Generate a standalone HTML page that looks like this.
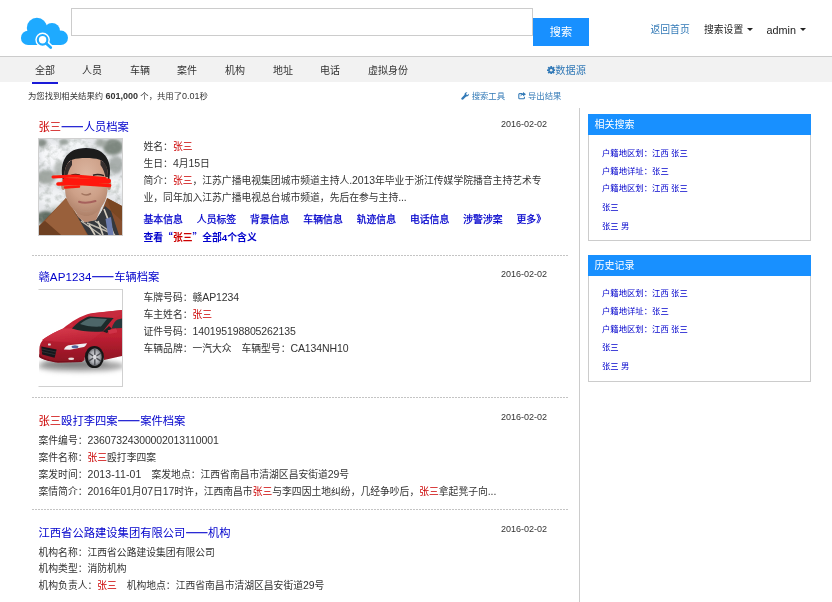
<!DOCTYPE html>
<html lang="zh-CN">
<head>
<meta charset="utf-8">
<title>搜索</title>
<style>
*{box-sizing:border-box;margin:0;padding:0}
html{width:832px;height:602px;overflow:hidden;background:#fff}
body{width:832px;height:602px;overflow:hidden;background:transparent;will-change:transform}
body{font-family:"Liberation Sans","Noto Sans CJK SC",sans-serif;font-size:9.8px;color:#333;position:relative}
a{text-decoration:none;color:inherit}
.abs{position:absolute;white-space:nowrap}
#search-input{position:absolute;left:71px;top:8px;width:462px;height:28px;border:1px solid #ccc;background:#fff}
#search-btn{position:absolute;left:533px;top:18px;width:56px;height:28px;background:#1890ff;color:#fff;font-size:11.2px;text-align:center;line-height:28px}
.toplink{position:absolute;top:23px;font-size:9.8px;line-height:14px;white-space:nowrap}
.caret{position:absolute;width:0;height:0;border-left:3px solid transparent;border-right:3px solid transparent;border-top:3.5px solid #222}
#nav{position:absolute;left:0;top:56px;width:832px;height:26px;background:#f2f2f2;border-top:1px solid #ccc}
#nav span{position:absolute;top:0;line-height:27px;font-size:10px;color:#333;white-space:nowrap}
#nav .ul{position:absolute;left:32px;top:25px;width:26px;height:2px;background:#1a1ad8}
.info{position:absolute;top:90px;font-size:8.35px;line-height:12px;white-space:nowrap;color:#333}
.tool{color:#337ab7}
.vline{position:absolute;left:579px;top:108px;width:1px;height:494px;background:#ccc}
.title{position:absolute;left:38.5px;font-size:11.3px;line-height:16px;color:#0000cc;white-space:nowrap}
.red{color:#cc0000}
.date{position:absolute;left:501px;font-size:9px;line-height:12px;color:#333;white-space:nowrap}
.row{position:absolute;font-size:9.8px;line-height:17px;color:#333;white-space:nowrap}
.l{font-size:10.5px;letter-spacing:-0.1px;line-height:1}
.q{font-family:"Noto Sans CJK SC",sans-serif}
.title .q{-webkit-text-stroke:0.5px #0000cc}
.sep{position:absolute;left:32px;width:536px;height:1px;background:repeating-linear-gradient(90deg,#c4c4c4 0,#c4c4c4 2px,transparent 2px,transparent 3px)}
.links{position:absolute;left:143.5px;font-size:9.85px;line-height:14px;color:#0000cc;white-space:nowrap}
.links a{display:inline-block;margin-right:13.9px}
.panel{position:absolute;left:588px;width:223px;border:1px solid #ccc;background:#fff}
.panel .hd{position:absolute;left:-1px;top:-1px;width:223px;height:21px;background:#1890ff;color:#fff;font-size:10px;line-height:21px;padding-left:6.5px}
.panel a{position:absolute;left:13px;font-size:8.35px;line-height:12px;color:#0000cc;white-space:nowrap}
.imgbox{position:absolute;left:38px;width:85px;border:1px solid #d0d0d0;background:#fff;overflow:hidden}
.imgbox svg{display:block}
</style>
</head>
<body>
<!-- logo -->
<svg class="abs" style="left:0;top:0" width="80" height="56" viewBox="0 0 80 56">
  <g fill="#1eaaff">
    <circle cx="36.9" cy="27.9" r="10.1"/>
    <circle cx="52" cy="31" r="8"/>
    <circle cx="28.1" cy="37.9" r="7.15"/>
    <circle cx="60.8" cy="37.8" r="7.2"/>
    <rect x="28.1" y="31" width="32.7" height="14"/>
  </g>
  <circle cx="42.6" cy="39.8" r="7.3" fill="#fff"/>
  <path d="M46.3 43.4 L50.7 47.5" stroke="#fff" stroke-width="5.6" stroke-linecap="round"/>
  <path d="M35 45h20v4h-20z" fill="#fff"/>
  <circle cx="42.6" cy="39.8" r="4.8" fill="#fff" stroke="#1eaaff" stroke-width="2.2"/>
  <path d="M46.3 43.4 L50.7 47.5" stroke="#1eaaff" stroke-width="2.8" stroke-linecap="round"/>
</svg>
<div id="search-input"></div>
<div id="search-btn">搜索</div>
<a class="toplink" style="left:650.5px;color:#337ab7">返回首页</a>
<a class="toplink" style="left:704px;color:#222">搜索设置</a><i class="caret" style="left:747px;top:28px"></i>
<a class="toplink" style="left:766.5px;color:#222;font-size:10.8px">admin</a><i class="caret" style="left:799.5px;top:28px"></i>

<div id="nav">
  <span style="left:35px">全部</span>
  <span style="left:82px">人员</span>
  <span style="left:130px">车辆</span>
  <span style="left:177px">案件</span>
  <span style="left:225px">机构</span>
  <span style="left:273px">地址</span>
  <span style="left:320px">电话</span>
  <span style="left:368px">虚拟身份</span>
  <span style="left:555.3px;color:#337ab7;font-size:10.2px">数据源</span>
  <div class="ul"></div>
</div>
<!-- gear -->
<svg class="abs" style="left:547px;top:65.5px" width="8.4" height="8.4" viewBox="-12 -12 24 24">
  <g fill="#337ab7">
    <circle r="8.2"/>
    <g id="gt"><rect x="-2.6" y="-12" width="5.2" height="24" rx="1"/></g>
    <rect x="-2.6" y="-12" width="5.2" height="24" rx="1" transform="rotate(45)"/>
    <rect x="-2.6" y="-12" width="5.2" height="24" rx="1" transform="rotate(90)"/>
    <rect x="-2.6" y="-12" width="5.2" height="24" rx="1" transform="rotate(135)"/>
  </g>
  <circle r="3.6" fill="#f2f2f2"/>
</svg>

<div class="info" style="left:28px">为您找到相关结果约 <b style="font-size:9px">601,000</b> 个，共用了<span style="font-size:9px">0.01</span>秒</div>
<!-- wrench -->
<svg class="abs" style="left:461px;top:92.3px" width="8" height="8" viewBox="0 0 16 16">
  <path d="M2.2 14.8 a1.7 1.7 0 0 1 -1.2 -2.9 L7.2 5.7 A4.4 4.4 0 0 1 12.9 0.6 L10.3 3.2 L10.9 5.3 L13 5.9 L15.6 3.3 A4.4 4.4 0 0 1 10.4 8.9 L4.3 15 a1.7 1.7 0 0 1 -2.1 -0.2z" fill="#337ab7"/>
</svg>
<div class="info tool" style="left:471.7px">搜索工具</div>
<!-- export -->
<svg class="abs" style="left:517.7px;top:92.3px" width="8" height="7.5" viewBox="0 0 16 15">
  <path d="M9 3.2H3.2a1.6 1.6 0 0 0 -1.6 1.6v7a1.6 1.6 0 0 0 1.6 1.6h8a1.6 1.6 0 0 0 1.6 -1.6V9.5" fill="none" stroke="#337ab7" stroke-width="2.1"/>
  <path d="M10 0.2 L16 4.4 L10 8.6 V6 C7.5 6 6 7 5 9.4 C5 5.6 7 3 10 2.8z" fill="#337ab7"/>
</svg>
<div class="info tool" style="left:528px">导出结果</div>

<div class="vline"></div>

<!-- result 1 -->
<div class="title" style="top:118px"><span class="red">张三</span><span class="q">——</span>人员档案</div>
<div class="date" style="top:117.5px">2016-02-02</div>
<div class="imgbox" style="top:138px;height:98px" id="img1"><svg width="83" height="96" viewBox="0 0 83 96">
  <defs>
    <filter id="b1" x="-10%" y="-10%" width="120%" height="120%"><feGaussianBlur stdDeviation="1.5"/></filter>
    <filter id="b2" x="-10%" y="-10%" width="120%" height="120%"><feGaussianBlur stdDeviation="0.6"/></filter>
    <filter id="b3" x="-10%" y="-10%" width="120%" height="120%"><feGaussianBlur stdDeviation="0.3"/></filter>
    <filter id="sn" x="0" y="0" width="100%" height="100%">
      <feTurbulence type="fractalNoise" baseFrequency="0.16" numOctaves="3" seed="11"/>
      <feColorMatrix type="matrix" values="0 0 0 0 0.30  0 0 0 0 0.34  0 0 0 0 0.31  2.2 0 0 0 -0.95"/>
    </filter>
    <radialGradient id="fg" cx="0.5" cy="0.3" r="0.75">
      <stop offset="0" stop-color="#dcb7a2"/><stop offset="0.55" stop-color="#cda088"/><stop offset="1" stop-color="#a97c64"/>
    </radialGradient>
  </defs>
  <rect width="83" height="96" fill="#e6e8eb"/>
  <g filter="url(#b1)">
    <ellipse cx="14" cy="16" rx="12" ry="11" fill="#f6f7f9"/>
    <ellipse cx="38" cy="6" rx="12" ry="6" fill="#f3f5f7"/>
    <ellipse cx="3" cy="4" rx="5" ry="4" fill="#848c86"/>
    <ellipse cx="25" cy="3" rx="5" ry="3" fill="#9aa19c"/>
    <ellipse cx="74" cy="8" rx="10" ry="8" fill="#7d877f"/>
    <ellipse cx="62" cy="4" rx="6" ry="4" fill="#a4aba6"/>
    <ellipse cx="77" cy="26" rx="7" ry="9" fill="#a9afad"/>
    <ellipse cx="7" cy="38" rx="10" ry="7" fill="#a3a9a4"/>
    <ellipse cx="20" cy="30" rx="5" ry="8" fill="#b7bcb9"/>
    <ellipse cx="76" cy="48" rx="9" ry="8" fill="#f3f5f7"/>
    <ellipse cx="12" cy="58" rx="14" ry="8" fill="#f0f2f4"/>
    <ellipse cx="7" cy="79" rx="10" ry="7" fill="#5f6c62"/>
    <ellipse cx="18" cy="70" rx="7" ry="4" fill="#d2d6d4"/>
  </g>
  <rect width="83" height="96" filter="url(#sn)" opacity="0.5"/>
  <g filter="url(#b2)">
    <!-- coat -->
    <path d="M27 59 L0 87 V96 H83 V67 L68 59 L62 74 L50 90 L38 76z" fill="#87502e"/>
    <path d="M27 59 L6 82 L22 96 H48 L38 76z" fill="#99603a"/>
    <path d="M0 87 L6 82 L22 96 H0z" fill="#6e3f22"/>
    <path d="M68 59 L83 67 V82 L72 72z" fill="#7a4624"/>
    <!-- scarf -->
    <path d="M34 72 L44 83 L57 81 L66 67 L72 72 L80 96 H49 L38 77z" fill="#34383e"/>
    <path d="M42 82 L62 96 M48 84 L72 94 M56 82 L76 96" stroke="#bdb8ad" stroke-width="1.5" fill="none"/>
    <path d="M65 70 L75 96 M59 82 L64 96 M50 86 L56 96" stroke="#d4cdbf" stroke-width="1.7" fill="none"/>
    <path d="M66.5 80 L72 78 L74.5 96 H69z" fill="#6d7db0"/>
    <!-- neck -->
    <path d="M33 64 L39 78 L46 83.5 L57 81 L64 64z" fill="#b88a72"/>
    <!-- hair -->
    <path d="M23.8 41 C20.5 24 26 9 47 9 C68 9 73.5 24 70.2 41 L66 40 L64 22 L30 22 L27 40z" fill="#1b1b1d"/>
    <!-- ears -->
    <ellipse cx="24.3" cy="46" rx="2.2" ry="5" fill="#b98c76"/>
    <ellipse cx="70" cy="46" rx="2.2" ry="5" fill="#b98c76"/>
    <!-- face -->
    <path d="M25.5 38 C25 30 28 22 34 20.5 C40 18.5 54 18.5 60 20.5 C66 22 69.5 30 69 38 L68.5 50 C68 60 65 65 60.5 70 C56 75 52 77 47.5 77 C43 77 38.5 75 34 70 C29.5 65 26.5 60 26 50z" fill="url(#fg)"/>
    <path d="M25.5 38 C25.5 30 27 24 33 21 L33 26 C30 30 29 34 28 38z M69 38 C69 30 67.5 24 61.5 21 L61.5 26 C64.5 30 65.5 34 66.5 38z" fill="#1b1b1d" opacity="0.85"/>
    <path d="M32 36.4 Q36 34.8 41 36.2 M54 36.2 Q59 34.6 65 36.6" stroke="#2a2220" stroke-width="1.5" fill="none"/>
    <!-- nose / mouth -->
    <path d="M42.5 54.5 Q47 57.5 52 54.5" stroke="#a1735e" stroke-width="1.5" fill="none"/>
    <path d="M40 62.8 Q47 65 56.5 62" stroke="#a6605b" stroke-width="2" fill="none" stroke-linecap="round"/>
    <path d="M41 71 Q47 74.5 54 70.5" stroke="#b78d76" stroke-width="1.4" fill="none"/>
  </g>
  <!-- red scribble -->
  <g filter="url(#b3)" stroke="#ff1808" stroke-linecap="round" stroke-linejoin="round" fill="none">
    <path d="M14 38 L36 37 L66 39.5" stroke-width="3"/>
    <path d="M26 41.5 L69.5 42" stroke-width="5"/>
    <path d="M19 45 L40 44.5 L70.5 46.5" stroke-width="3.6"/>
    <path d="M26 48.5 L40 47.5" stroke-width="2.4"/>
  </g>
</svg></div>
<div class="row" style="left:143.5px;top:138px">姓名：<span class="red">张三</span></div>
<div class="row" style="left:143.5px;top:155px">生日：<span class="l">4</span>月<span class="l">15</span>日</div>
<div class="row" style="left:143.5px;top:172px">简介：<span class="red">张三</span>，江苏广播电视集团城市频道主持人<span class="l">.</span><span class="l">2013</span>年毕业于浙江传媒学院播音主持艺术专</div>
<div class="row" style="left:143.5px;top:189px">业，同年加入江苏广播电视总台城市频道，先后在参与主持<span class="l">...</span></div>
<div class="links" style="top:212.5px;-webkit-text-stroke:0.25px #0000cc"><a>基本信息</a><a>人员标签</a><a>背景信息</a><a>车辆信息</a><a>轨迹信息</a><a>电话信息</a><a>涉警涉案</a><a>更多》</a></div>
<div class="links" style="top:230px;font-size:9.8px;font-weight:bold">查看<span class="q">“</span><span class="red">张三</span><span class="q">”</span>全部4个含义</div>
<div class="sep" style="top:255px"></div>

<!-- result 2 -->
<div class="title" style="top:268px">赣<span style="font-size:11.6px;letter-spacing:0.08px;line-height:1">AP1234</span><span class="q">——</span>车辆档案</div>
<div class="date" style="top:268px">2016-02-02</div>
<div class="imgbox" style="top:289px;height:98px;border-left-color:transparent" id="img2"><svg width="83" height="96" viewBox="0 0 83 96">
  <defs>
    <filter id="c1" x="-10%" y="-10%" width="120%" height="120%"><feGaussianBlur stdDeviation="0.4"/></filter>
    <filter id="c2" x="-20%" y="-80%" width="140%" height="260%"><feGaussianBlur stdDeviation="2.6"/></filter>
    <linearGradient id="cg" x1="0" y1="0" x2="0" y2="1">
      <stop offset="0" stop-color="#c9283a"/><stop offset="0.5" stop-color="#bf2033"/><stop offset="1" stop-color="#8a1322"/>
    </linearGradient>
    <linearGradient id="hg" x1="0.2" y1="0" x2="0.7" y2="1">
      <stop offset="0" stop-color="#d63a4c"/><stop offset="1" stop-color="#b91d31"/>
    </linearGradient>
    <radialGradient id="wg" cx="0.5" cy="0.5" r="0.5">
      <stop offset="0" stop-color="#e2e2e6"/><stop offset="0.7" stop-color="#a9abb0"/><stop offset="1" stop-color="#6c6e73"/>
    </radialGradient>
  </defs>
  <rect width="83" height="96" fill="#fff"/>
  <ellipse cx="42" cy="76" rx="44" ry="5.5" fill="#a2a2a2" filter="url(#c2)"/>
  <ellipse cx="36" cy="73.5" rx="34" ry="2.2" fill="#6a6a6a" filter="url(#c2)"/>
  <g filter="url(#c1)">
    <!-- body -->
    <path d="M0.3 60 C0.3 55 2 51 6 48 C12 44 18 41 24 38.5 C32 32 42 25.5 52 23.3 L83 20 V66 L65 70 C64 56 46 56 45.5 70 L42.8 72 L19 72.5 C10 71 3 69 0.3 67z" fill="url(#cg)"/>
    <!-- hood -->
    <path d="M3 50 C10 45 18 41 24.5 38.5 L33 38.5 C42 41 52 42 64 41.5 C58 46 52 50 48 53.5 C38 53 16 52 3 50z" fill="url(#hg)"/>
    <!-- roof -->
    <path d="M50 26.5 C52 24 54 23.2 56 23 L83 20 V24.5 L74.5 28z" fill="#c72b3d"/>
    <!-- windshield -->
    <path d="M32.9 38.5 C38 33 44 28.5 50.1 26.6 L74.7 27.9 C71 32 67 37 64 41.5 C52 42.2 42 41.2 32.9 38.5z" fill="#1b2a2c"/>
    <path d="M41 34 C45 30.5 49 28.5 52 28 L68 29 C66 31.5 64 34 62 36.5 C54 37 46 36 41 34z" fill="#4d6667"/>
    <!-- side window -->
    <path d="M72.7 38.6 C74 34 76 31 78.7 29.6 L83 28.6 V38z" fill="#27373a"/>
    <path d="M64 41.5 L68 43 L72.7 38.6 L70 36z" fill="#1b2022"/>
    <!-- mirrors -->
    <path d="M68.7 40.2 L77 38.6 Q78.5 40.5 78 42.6 L70.2 44z" fill="#cf3346"/>
    <path d="M30 34.2 L33.6 33.2 L34.2 36 L30.8 37z" fill="#c52b3d"/>
    <!-- grille -->
    <path d="M2.3 56.5 L17.6 59.4 L15.6 67.8 L3.2 64.6z" fill="#17171a"/>
    <path d="M3 59 L17 62 M3 61.6 L16.4 64.8" stroke="#3a3a3e" stroke-width="0.7"/>
    <!-- bumper bottom -->
    <path d="M0.3 64 C3 68 10 70.5 19 71 L42 70.5 L42.8 72 L19 72.6 C10 71.5 3 69.5 0.3 67z" fill="#7a101d"/>
    <!-- fog light -->
    <ellipse cx="32.2" cy="68.7" rx="3" ry="1.3" fill="#eadfdc"/>
    <path d="M22 67 L40 66.5" stroke="#9c1626" stroke-width="0.8"/>
    <!-- headlight -->
    <path d="M24.9 59.4 C26 57 28 55.6 29.5 55.2 L48.1 53.2 C47 55.2 46 56.4 44.8 57.1 L30.9 59.8z" fill="#f0f0f3"/>
    <ellipse cx="36" cy="56.8" rx="3.4" ry="1.5" fill="#53649c"/>
    <!-- emblem -->
    <rect x="9" y="53.6" width="2.8" height="1.8" rx="0.4" fill="#ead9db"/>
    <!-- wheel -->
    <ellipse cx="55.4" cy="67.1" rx="9.6" ry="11" fill="#151517"/>
    <ellipse cx="55.8" cy="67.1" rx="7" ry="8.8" fill="url(#wg)"/>
    <path d="M55.8 58.6 V75.6 M49.6 63 L62 71.2 M49.6 71.2 L62 63" stroke="#4d4f54" stroke-width="1.4"/>
    <ellipse cx="55.8" cy="67.1" rx="1.9" ry="2.3" fill="#dcdce0"/>
  </g>
</svg></div>
<div class="row" style="left:143.5px;top:289px">车牌号码：赣<span class="l">AP1234</span></div>
<div class="row" style="left:143.5px;top:306px">车主姓名：<span class="red">张三</span></div>
<div class="row" style="left:143.5px;top:323px">证件号码：<span class="l">140195198805262135</span></div>
<div class="row" style="left:143.5px;top:340px">车辆品牌：一汽大众　车辆型号：<span class="l">CA134NH10</span></div>
<div class="sep" style="top:397px"></div>

<!-- result 3 -->
<div class="title" style="top:412px"><span class="red">张三</span>殴打李四案<span class="q">——</span>案件档案</div>
<div class="date" style="top:410.5px">2016-02-02</div>
<div class="row" style="left:38.5px;top:432px">案件编号：<span class="l">23607324300002013110001</span></div>
<div class="row" style="left:38.5px;top:449px">案件名称：<span class="red">张三</span>殴打李四案</div>
<div class="row" style="left:38.5px;top:466px">案发时间：<span class="l" style="letter-spacing:0.1px">2013-11-01</span><span style="margin-left:0.3px">　</span>案发地点：江西省南昌市清湖区昌安街道<span class="l">29</span>号</div>
<div class="row" style="left:38.5px;top:483px">案情简介：<span class="l">2016</span>年<span class="l">01</span>月<span class="l">07</span>日<span class="l">17</span>时许，江西南昌市<span class="red">张三</span>与李四因土地纠纷，几经争吵后，<span class="red">张三</span>拿起凳子向<span class="l">...</span></div>
<div class="sep" style="top:509px"></div>

<!-- result 4 -->
<div class="title" style="top:524px">江西省公路建设集团有限公司<span class="q">——</span>机构</div>
<div class="date" style="top:522.5px">2016-02-02</div>
<div class="row" style="left:38.5px;top:544px">机构名称：江西省公路建设集团有限公司</div>
<div class="row" style="left:38.5px;top:560px">机构类型：消防机构</div>
<div class="row" style="left:38.5px;top:577px">机构负责人：<span class="red">张三</span>　机构地点：江西省南昌市清湖区昌安街道<span class="l">29</span>号</div>

<!-- sidebar -->
<div class="panel" style="top:114px;height:127px">
  <div class="hd">相关搜索</div>
  <a style="top:31.5px">户籍地区划：江西 张三</a>
  <a style="top:49.5px">户籍地详址：张三</a>
  <a style="top:67.3px">户籍地区划：江西 张三</a>
  <a style="top:85.5px">张三</a>
  <a style="top:104.5px">张三 男</a>
</div>
<div class="panel" style="top:255px;height:127px">
  <div class="hd">历史记录</div>
  <a style="top:30.5px">户籍地区划：江西 张三</a>
  <a style="top:49px">户籍地详址：张三</a>
  <a style="top:67px">户籍地区划：江西 张三</a>
  <a style="top:85.3px">张三</a>
  <a style="top:103.5px">张三 男</a>
</div>
</body>
</html>
